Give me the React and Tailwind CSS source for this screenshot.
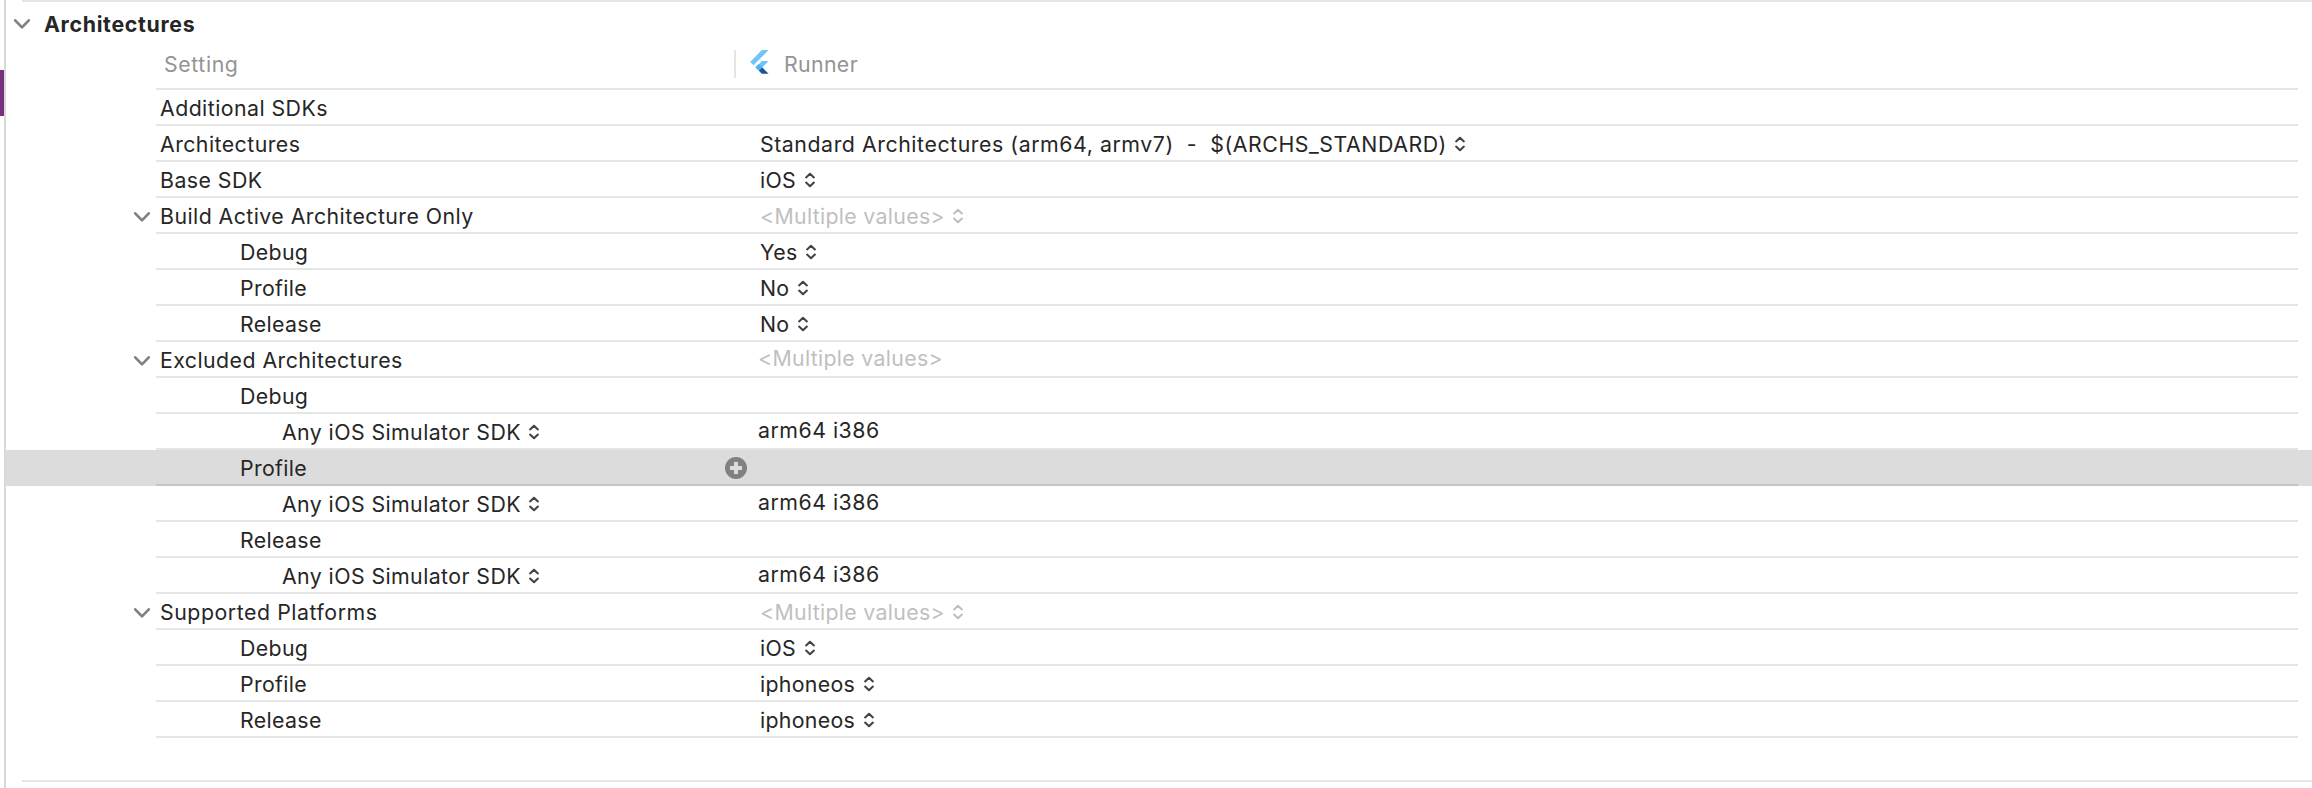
const GroupChevron = () => (
  <svg className="block h-4 w-5 shrink-0" viewBox="0 0 20 16" fill="none">
    <path d="M3.2 4.3 L10 11.4 L16.8 4.3" stroke="#808080" strokeWidth="2.6" strokeLinecap="round" strokeLinejoin="round" />
  </svg>
);

const Stepper = ({ muted }) => (
  <svg className={`block h-4 w-3 shrink-0 ${muted ? 'text-[#bfbfbf]' : 'text-[#444444]'}`} viewBox="0 0 12 16" fill="none">
    <path d="M2.1 5.4 L6 1.8 L9.9 5.4 M2.1 10.6 L6 14.2 L9.9 10.6" stroke="currentColor" strokeWidth="2.1" strokeLinecap="round" strokeLinejoin="round" />
  </svg>
);

const AddBadge = () => (
  <svg className="block h-[22px] w-[22px] shrink-0" viewBox="0 0 22 22">
    <circle cx="11" cy="11" r="11" fill="#808183" />
    <path d="M11 5v12M5 11h12" stroke="#dcdcdc" strokeWidth="4" />
  </svg>
);

const FlutterLogo = () => (
  <svg className="block h-6 w-[19px] shrink-0" viewBox="0 0 19 24">
    <path d="M11.8 0H18.6L3.5 15.2L0.2 11.9Z" fill="#6fc5f8" />
    <path d="M11.8 11H18.6L12.3 17.4L8.9 20.8L5.5 17.4Z" fill="#6fc5f8" />
    <path d="M8.9 14L12.3 17.4L8.9 20.8L5.5 17.4Z" fill="#47b3f3" />
    <path d="M8.9 20.8L12.3 17.4L18.6 23.8H11.8Z" fill="#1b5397" />
  </svg>
);

const rows = [
  { name: 'Additional SDKs' },
  { name: 'Architectures', value: 'Standard Architectures (arm64, armv7)  -  $(ARCHS_STANDARD)', valueTracking: 'tracking-[0.56px]', menu: true },
  { name: 'Base SDK', value: 'iOS', menu: true },
  { name: 'Build Active Architecture Only', group: true, value: '<Multiple values>', menu: true, muted: true },
  { name: 'Debug', level: 1, value: 'Yes', menu: true },
  { name: 'Profile', level: 1, value: 'No', menu: true },
  { name: 'Release', level: 1, value: 'No', menu: true },
  { name: 'Excluded Architectures', group: true, value: '<Multiple values>', muted: true },
  { name: 'Debug', level: 1 },
  { name: 'Any iOS Simulator SDK', level: 2, value: 'arm64 i386', valueTracking: 'tracking-[0.5px]' },
  { name: 'Profile', level: 1, selected: true },
  { name: 'Any iOS Simulator SDK', level: 2, value: 'arm64 i386', valueTracking: 'tracking-[0.5px]' },
  { name: 'Release', level: 1 },
  { name: 'Any iOS Simulator SDK', level: 2, value: 'arm64 i386', valueTracking: 'tracking-[0.5px]' },
  { name: 'Supported Platforms', nameTracking: 'tracking-[0.55px]', group: true, value: '<Multiple values>', menu: true, muted: true },
  { name: 'Debug', level: 1, value: 'iOS', menu: true },
  { name: 'Profile', level: 1, value: 'iphoneos', menu: true },
  { name: 'Release', level: 1, value: 'iphoneos', menu: true },
];

const indents = ['pl-1 tracking-[0.45px]', 'pl-[84px] tracking-[0.35px]', 'pl-[126px] tracking-[0.42px]'];

function Row({ name, nameTracking, value, valueTracking = 'tracking-[0.32px]', level = 0, group, menu, muted, selected }) {
  return (
    <div className={`flex h-9 pr-[14px] ${selected ? 'bg-[#dcdcdc]' : ''}`}>
      <div className="flex w-[150px] shrink-0 justify-end pr-1 pt-[11px]">{group && <GroupChevron />}</div>
      <div className={`flex min-w-0 flex-1 border-b-2 ${selected ? 'border-[#c4c4c4]' : 'border-[#e5e5e5]'}`}>
        <div className={`flex h-9 w-[569px] shrink-0 items-center gap-[7px] ${indents[level]}`}>
          <span className={nameTracking}>{name}</span>
          {level === 2 && <Stepper />}
        </div>
        <div className="flex h-9 w-[33px] shrink-0 items-center">{selected && <AddBadge />}</div>
        {value && (
          <div className={`flex items-center gap-[7.5px] whitespace-pre ${menu ? 'h-9 pl-0.5' : 'h-8'} ${muted ? 'text-[#bfbfbf]' : ''}`}>
            <span className={valueTracking}>{value}</span>
            {menu && <Stepper muted={muted} />}
          </div>
        )}
      </div>
    </div>
  );
}

export default function App() {
  return (
    <div className="flex h-[788px] w-[2312px] overflow-hidden bg-white font-['Inter',sans-serif] text-[21.3px] leading-9 tracking-[0.2px] text-[#262626]">
      <div className="w-1 shrink-0 pt-[70px]">
        <div className="h-[46px] bg-[#77317d]" />
      </div>
      <div className="min-w-0 flex-1 border-l-2 border-[#d9d9d9]">
        <div className="ml-4 h-0.5 bg-[#e5e5e5]" />
        <div className="flex h-11 items-center pl-1.5">
          <GroupChevron />
          <h2 className="pl-3 font-bold tracking-[0.7px]">Architectures</h2>
        </div>
        <div className="ml-[150px] mr-[14px] flex h-11 border-b-2 border-[#e5e5e5] text-[#949494]">
          <div className="w-[578px] pl-2 tracking-[0.6px]">Setting</div>
          <div className="mt-1 h-7 w-0.5 bg-[#e5e5e5]" />
          <div className="flex pl-[14px]">
            <div className="pt-1"><FlutterLogo /></div>
            <span className="pl-[15px] tracking-[0.35px]">Runner</span>
          </div>
        </div>
        {rows.map((row, i) => <Row key={i} {...row} />)}
        <div className="ml-4 mt-[42px] h-0.5 bg-[#e5e5e5]" />
      </div>
    </div>
  );
}
